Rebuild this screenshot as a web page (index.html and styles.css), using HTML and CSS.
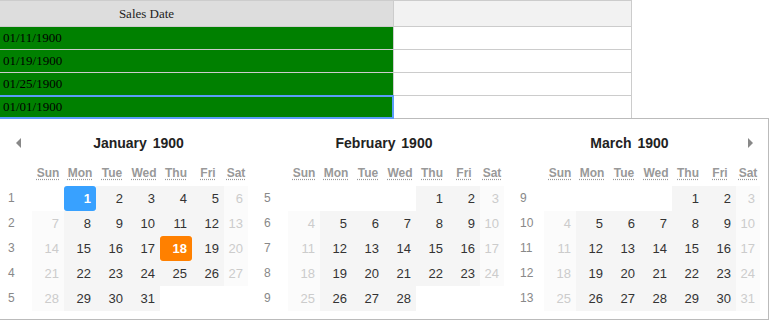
FILE: index.html
```html
<!DOCTYPE html>
<html lang="en">
<head>
    <meta charset="UTF-8">
    <title>Sales Date</title>
    <link rel="stylesheet" href="styles.css">
</head>
<body>
    <div class="grid">
        <div class="grid-row grid-head">
            <div class="cell cell-main">Sales Date</div>
            <div class="cell cell-rest"></div>
        </div>
        <div class="grid-row">
            <div class="cell cell-main">01/11/1900</div>
            <div class="cell cell-rest"></div>
        </div>
        <div class="grid-row">
            <div class="cell cell-main">01/19/1900</div>
            <div class="cell cell-rest"></div>
        </div>
        <div class="grid-row">
            <div class="cell cell-main">01/25/1900</div>
            <div class="cell cell-rest"></div>
        </div>
        <div class="grid-row">
            <div class="cell cell-main is-editing">01/01/1900</div>
            <div class="cell cell-rest"></div>
        </div>
    </div>

    <div class="datepicker">
        <div class="month">
            <div class="month-head">
                <span class="nav nav-prev">
                    <svg width="5" height="10" viewBox="0 0 5 10"><polygon points="5,0 5,10 0,5" fill="#888"/></svg>
                </span>
                <div class="month-title"><span>January</span> <span>1900</span></div>
            </div>
            <div class="days" data-start="1" data-count="31" data-week="1"></div>
        </div>
        <div class="month">
            <div class="month-head">
                <div class="month-title"><span>February</span> <span>1900</span></div>
            </div>
            <div class="days" data-start="4" data-count="28" data-week="5"></div>
        </div>
        <div class="month">
            <div class="month-head">
                <div class="month-title"><span>March</span> <span>1900</span></div>
                <span class="nav nav-next">
                    <svg width="5" height="10" viewBox="0 0 5 10"><polygon points="0,0 0,10 5,5" fill="#888"/></svg>
                </span>
            </div>
            <div class="days" data-start="4" data-count="31" data-week="9"></div>
        </div>
    </div>

    <script>
        const dayNames = [['Sun', 'Sunday'], ['Mon', 'Monday'], ['Tue', 'Tuesday'], ['Wed', 'Wednesday'], ['Thu', 'Thursday'], ['Fri', 'Friday'], ['Sat', 'Saturday']];

        document.querySelectorAll('.days').forEach((grid, monthIndex) => {
            const start = Number(grid.dataset.start);
            const count = Number(grid.dataset.count);
            const firstWeek = Number(grid.dataset.week);
            let html = '<div class="wk"></div>';

            dayNames.forEach(([short, full]) => {
                html += '<div class="dow"><abbr title="' + full + '">' + short + '</abbr></div>';
            });

            for (let row = 0; row < 5; row++) {
                html += '<div class="wk">' + (firstWeek + row) + '</div>';
                for (let col = 0; col < 7; col++) {
                    const day = row * 7 + col - start + 1;
                    if (day < 1 || day > count) {
                        html += '<div class="day"></div>';
                        continue;
                    }
                    let cls = 'day';
                    cls += (col === 0 || col === 6) ? ' weekend' : ' weekday';
                    // 1st = selected, 18th = today
                    if (monthIndex === 0 && day === 1) cls += ' selected';
                    if (monthIndex === 0 && day === 18) cls += ' today';
                    html += '<div class="' + cls + '">' + day + '</div>';
                }
            }
            grid.innerHTML = html;
        });
    </script>
</body>
</html>
```

FILE: styles.css
```css
* {
    margin: 0;
    padding: 0;
    box-sizing: border-box;
}

body {
    background-color: #ffffff;
    font-family: "Liberation Sans", Arial, sans-serif;
}

/* grid */
.grid {
    width: 632px;
    border-top: 1px solid #cccccc;
    font-family: "Liberation Serif", "Times New Roman", serif;
    font-size: 13px;
    color: #000000;
}

.grid-row {
    display: flex;
    height: 23px;
    border-bottom: 1px solid #cccccc;
}

.grid-head {
    height: 26px;
}

.cell {
    line-height: 22px;
    border-right: 1px solid #cccccc;
}

.cell-main {
    position: relative;
    width: 394px;
    padding-left: 3px;
    background-color: #008000;
}

.cell-rest {
    width: 238px;
    background-color: #ffffff;
}

.grid-head .cell {
    line-height: 25px;
}

.grid-head .cell-main {
    background-color: #dddddd;
    color: #222222;
    text-align: center;
    padding-left: 0;
    padding-right: 100px;
}

.grid-head .cell-rest {
    background-color: #f2f2f2;
}

.is-editing::after {
    content: '';
    position: absolute;
    left: -2px;
    top: -1px;
    right: -1px;
    bottom: -1px;
    border: 2px solid #5a9cf8;
}

/* calendar */
.datepicker {
    display: flex;
    width: 770px;
    height: 202px;
    margin-top: -1px;
    margin-left: -1px;
    background-color: #ffffff;
    border: 1px solid #bbbbbb;
}

.month {
    width: 256px;
    padding-top: 12px;
}

.month-head {
    display: flex;
    align-items: center;
    height: 24px;
}

.month-title {
    flex: 1;
    text-align: center;
    font-size: 14px;
    font-weight: bold;
    color: #222222;
    word-spacing: 2px;
}

.nav {
    display: flex;
    align-items: center;
    width: 21px;
    height: 24px;
}

.nav-prev {
    justify-content: flex-end;
}

.nav-next {
    justify-content: flex-start;
    padding-left: 1px;
}

.days {
    display: grid;
    grid-template-columns: repeat(7, 32px) 24px;
    grid-auto-rows: 25px;
    width: 248px;
    margin-top: 6px;
    font-size: 13px;
    line-height: 25px;
}

.dow {
    text-align: center;
    font-size: 12px;
    font-weight: bold;
    color: #999999;
    line-height: 24px;
}

.dow abbr {
    text-decoration: underline dotted;
    text-underline-offset: 2px;
    cursor: help;
}

.wk {
    padding-left: 8px;
    font-size: 12px;
    color: #888888;
}

.day {
    text-align: right;
    padding-right: 5px;
}

.weekday {
    background-color: #f5f5f5;
    color: #333333;
}

.weekend {
    background-color: #fbfbfb;
    color: #cccccc;
}

.selected,
.today {
    color: #ffffff;
    font-weight: bold;
    border-radius: 3px;
}

.selected {
    background-color: #38a1ff;
}

.today {
    background-color: #ff8000;
}
```
